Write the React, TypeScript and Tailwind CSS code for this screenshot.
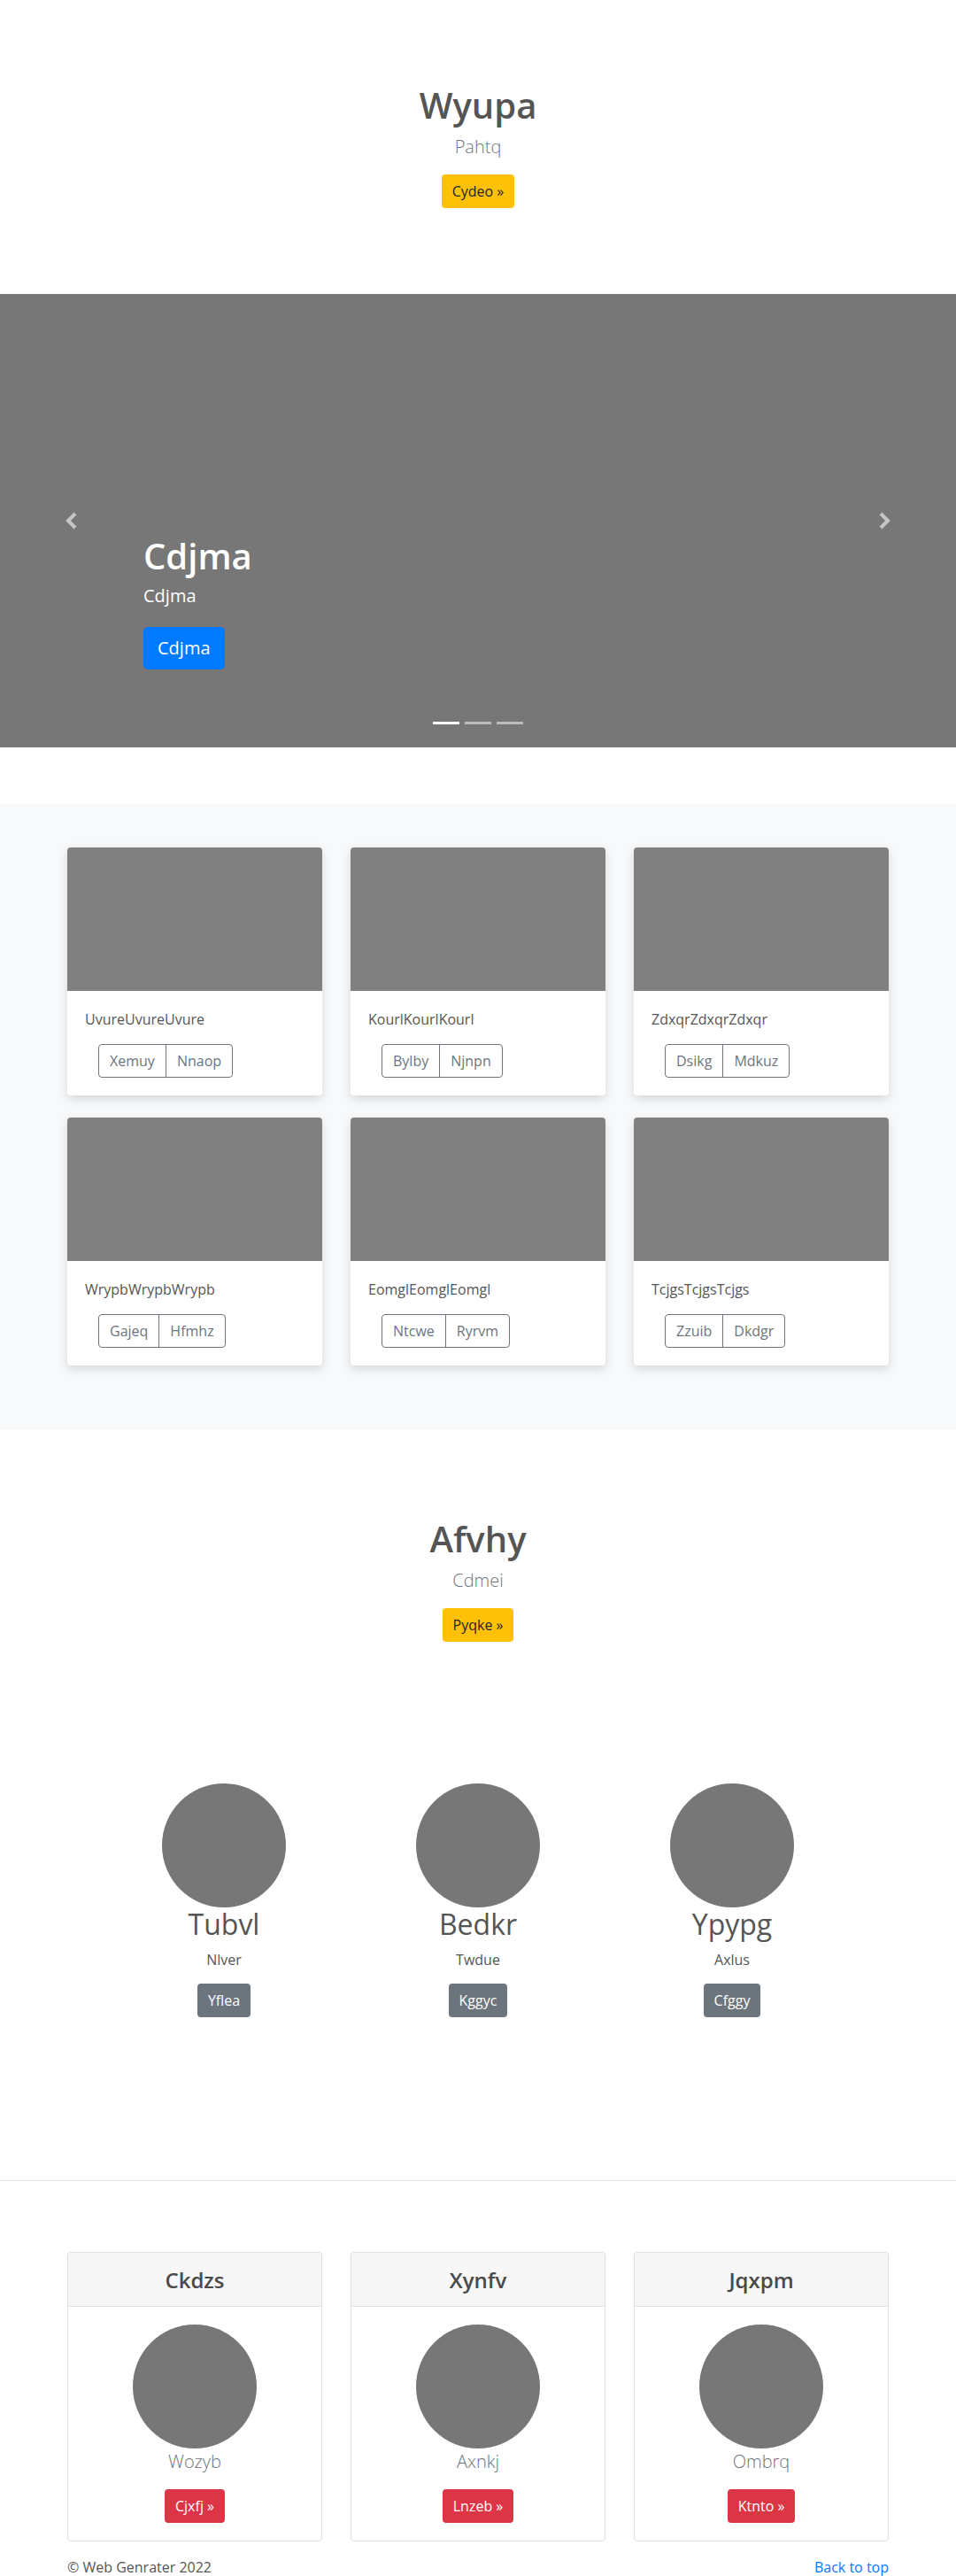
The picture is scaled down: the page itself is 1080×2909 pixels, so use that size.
import React from "react";

const albumCards = [
  { text: "UvureUvureUvure", a: "Xemuy", b: "Nnaop" },
  { text: "KourlKourlKourl", a: "Bylby", b: "Njnpn" },
  { text: "ZdxqrZdxqrZdxqr", a: "Dsikg", b: "Mdkuz" },
  { text: "WrypbWrypbWrypb", a: "Gajeq", b: "Hfmhz" },
  { text: "EomglEomglEomgl", a: "Ntcwe", b: "Ryrvm" },
  { text: "TcjgsTcjgsTcjgs", a: "Zzuib", b: "Dkdgr" },
];

const people = [
  { name: "Tubvl", sub: "Nlver", btn: "Yflea" },
  { name: "Bedkr", sub: "Twdue", btn: "Kggyc" },
  { name: "Ypypg", sub: "Axlus", btn: "Cfggy" },
];

const pricing = [
  { title: "Ckdzs", sub: "Wozyb", btn: "Cjxfj »" },
  { title: "Xynfv", sub: "Axnkj", btn: "Lnzeb »" },
  { title: "Jqxpm", sub: "Ombrq", btn: "Ktnto »" },
];

function Intro({ title, sub, btn, pt }: { title: string; sub: string; btn: string; pt: string }) {
  return (
    <div className={`flex flex-col items-center text-center ${pt}`}>
      <h1 className="text-[40px] leading-[48px] font-semibold text-[#555] mb-2">{title}</h1>
      <p className="text-[20px] leading-[30px] font-light text-[#6c757d] mb-4">{sub}</p>
      <a className="inline-flex items-center h-[38px] px-3 rounded bg-[#ffc107] text-[#212529] text-[16px]">
        {btn}
      </a>
    </div>
  );
}

export default function App() {
  return (
    <div className="font-['Segoe_UI','Open_Sans',sans-serif] text-[#555] bg-white">
      {/* Hero */}
      <section className="h-[332px]">
        <Intro title="Wyupa" sub="Pahtq" btn="Cydeo »" pt="pt-[95px]" />
      </section>

      {/* Carousel */}
      <section className="relative h-[512px] bg-[#777]">
        <div className="absolute left-[72px] top-[246px]">
          <svg width="18" height="20" viewBox="0 0 18 20">
            <path d="M13 2 L5 10 L13 18" fill="none" stroke="#c4c4c4" strokeWidth="4" />
          </svg>
        </div>
        <div className="absolute left-[990px] top-[246px]">
          <svg width="18" height="20" viewBox="0 0 18 20">
            <path d="M5 2 L13 10 L5 18" fill="none" stroke="#c4c4c4" strokeWidth="4" />
          </svg>
        </div>
        <div className="absolute left-[162px] top-[272px] text-white">
          <h2 className="text-[40px] leading-[48px] font-semibold">Cdjma</h2>
          <p className="text-[20px] leading-[30px] mt-[6px]">Cdjma</p>
          <a className="mt-[20px] inline-flex items-center h-[48px] px-4 rounded-[5px] bg-[#007bff] text-white text-[20px]">
            Cdjma
          </a>
        </div>
        <div className="absolute top-[483px] left-0 right-0 flex justify-center gap-[6px]">
          <span className="w-[30px] h-[3px] bg-white" />
          <span className="w-[30px] h-[3px] bg-white/50" />
          <span className="w-[30px] h-[3px] bg-white/50" />
        </div>
      </section>

      {/* Album */}
      <section className="mt-[64px] bg-[#f8f9fa] pt-[49px] pb-[73px]">
        <div className="mx-auto w-[928px] grid grid-cols-3 gap-x-[32px] gap-y-[25px]">
          {albumCards.map((c) => (
            <div
              key={c.text}
              className="bg-white rounded overflow-hidden shadow-[0_4px_12px_rgba(0,0,0,0.14)]"
            >
              <div className="h-[162px] bg-[#808080]" />
              <div className="p-5">
                <p className="text-[16px] leading-[24px] text-[#555] mb-4">{c.text}</p>
                <div className="ml-[15px] inline-flex h-[38px] rounded border border-[#6c757d] text-[#6c757d] text-[16px]">
                  <span className="flex items-center px-3">{c.a}</span>
                  <span className="flex items-center px-3 border-l border-[#6c757d]">{c.b}</span>
                </div>
              </div>
            </div>
          ))}
        </div>
      </section>

      {/* Second intro */}
      <section>
        <Intro title="Afvhy" sub="Cdmei" btn="Pyqke »" pt="pt-[99px]" />
      </section>

      {/* People */}
      <section className="pt-[160px] pb-[184px]">
        <div className="mx-auto w-[861px] grid grid-cols-3">
          {people.map((p) => (
            <div key={p.name} className="flex flex-col items-center text-center">
              <div className="w-[140px] h-[140px] rounded-full bg-[#777]" />
              <h2 className="text-[32px] leading-[38px] font-normal text-[#555]">{p.name}</h2>
              <p className="text-[16px] leading-[24px] mt-[9px] text-[#555]">{p.sub}</p>
              <a className="mt-[15px] inline-flex items-center h-[38px] px-3 rounded bg-[#6c757d] text-white text-[16px]">
                {p.btn}
              </a>
            </div>
          ))}
        </div>
      </section>

      <hr className="border-0 border-t border-[#e5e5e5]" />

      {/* Pricing */}
      <section className="pt-[80px]">
        <div className="mx-auto w-[928px] grid grid-cols-3 gap-x-[32px]">
          {pricing.map((p) => (
            <div key={p.title} className="rounded border border-[#dfdfdf] overflow-hidden">
              <div className="h-[61px] bg-[#f7f7f7] border-b border-[#dfdfdf] flex items-center justify-center">
                <h4 className="text-[24px] leading-[29px] font-semibold text-[#4a4a4a]">{p.title}</h4>
              </div>
              <div className="flex flex-col items-center pt-[20px] pb-[20px]">
                <div className="w-[140px] h-[140px] rounded-full bg-[#777]" />
                <p className="text-[20px] leading-[30px] font-light text-[#6c757d]">{p.sub}</p>
                <a className="mt-[16px] inline-flex items-center h-[38px] px-3 rounded bg-[#dc3545] text-white text-[16px]">
                  {p.btn}
                </a>
              </div>
            </div>
          ))}
        </div>
      </section>

      {/* Footer */}
      <footer className="mx-auto w-[928px] flex justify-between mt-[17px] text-[16px] leading-[24px]">
        <p className="text-[#555]">© Web Genrater 2022</p>
        <a className="text-[#007bff]">Back to top</a>
      </footer>
    </div>
  );
}
